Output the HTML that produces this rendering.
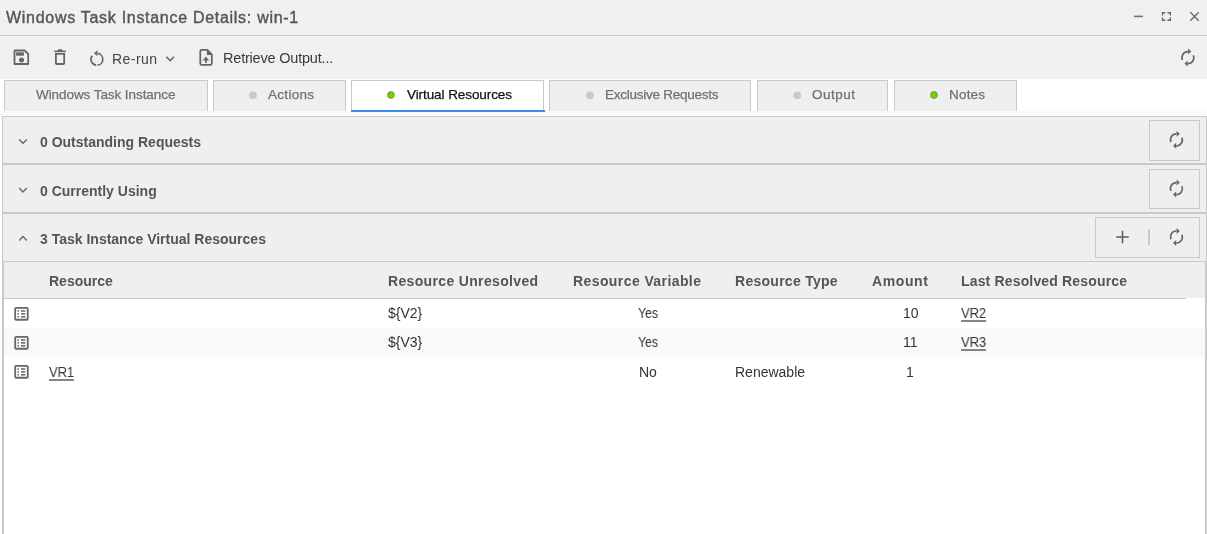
<!DOCTYPE html>
<html><head><meta charset="utf-8">
<style>
*{margin:0;padding:0;box-sizing:border-box}
html,body{width:1207px;height:534px;overflow:hidden;background:#f0f0f0;font-family:"Liberation Sans",sans-serif}
.a{position:absolute}
.t{position:absolute;white-space:nowrap;line-height:1;will-change:transform}
.hl{position:absolute;height:1px;background:#c9c9c9}
.tab{position:absolute;top:80px;height:31px;background:#efefef;border:1px solid #c9c9c9;border-bottom:none}
.btn{position:absolute;border:1px solid #c9c9c9;background:#efefef}
.sh{font-size:14px;font-weight:bold;color:#555}
.th{font-size:14px;font-weight:bold;color:#555}
.td{font-size:14px;color:#333}
.u{text-decoration:underline;text-decoration-color:#858585;text-decoration-thickness:1.6px;text-underline-offset:2px;transform:scaleX(0.93);transform-origin:0 0}
</style></head><body>
<!-- title bar -->
<div class="t" style="left:6px;top:9.5px;font-size:16px;color:#555;letter-spacing:0.71px;-webkit-text-stroke:0.4px #555">Windows Task Instance Details: win-1</div>
<div class="hl" style="left:0;top:35px;width:1207px"></div>

<!-- toolbar text -->
<div class="t" style="left:111.7px;top:52px;font-size:14px;color:#444;letter-spacing:0.45px">Re-run</div>
<div class="t" style="left:223.4px;top:50.5px;font-size:14.5px;color:#3a3a3a;letter-spacing:-0.2px">Retrieve Output...</div>

<!-- tab strip -->
<div class="a" style="left:0;top:79px;width:1207px;height:455px;background:#fff"></div>
<div class="a" style="left:0;top:111px;width:1207px;height:5px;background:#f9f9f9"></div>
<div class="tab" style="left:4px;width:204px"></div>
<div class="tab" style="left:213px;width:133px"></div>
<div class="tab" style="left:351px;width:193px;background:#fff"></div>
<div class="a" style="left:351px;top:110px;width:194px;height:2px;background:#3a8eea"></div>
<div class="tab" style="left:549px;width:202px"></div>
<div class="tab" style="left:757px;width:131px"></div>
<div class="tab" style="left:894px;width:123px"></div>
<div class="t" style="left:35.5px;top:88.4px;font-size:13.5px;color:#707070;-webkit-text-stroke:0.25px #707070;letter-spacing:-0.07px">Windows Task Instance</div>
<div class="t" style="left:268.4px;top:88.4px;font-size:13.5px;color:#707070;-webkit-text-stroke:0.25px #707070;letter-spacing:0.3px">Actions</div>
<div class="t" style="left:406.8px;top:88.4px;font-size:13.5px;color:#111;-webkit-text-stroke:0.25px #111;letter-spacing:-0.08px">Virtual Resources</div>
<div class="t" style="left:605.2px;top:88.4px;font-size:13.5px;color:#707070;-webkit-text-stroke:0.25px #707070;letter-spacing:-0.25px">Exclusive Requests</div>
<div class="t" style="left:812.3px;top:88.4px;font-size:13.5px;color:#707070;-webkit-text-stroke:0.25px #707070;letter-spacing:0.5px">Output</div>
<div class="t" style="left:949.1px;top:88.4px;font-size:13.5px;color:#707070;-webkit-text-stroke:0.25px #707070;letter-spacing:0.2px">Notes</div>

<!-- panel -->
<div class="a" style="left:2px;top:116px;width:1205px;height:418px;background:#efefef;border:1px solid #c9c9c9;border-bottom:none"></div>
<div class="hl" style="left:2px;top:163px;width:1205px;height:2px"></div>
<div class="hl" style="left:2px;top:212px;width:1205px;height:2px"></div>
<div class="hl" style="left:2px;top:261px;width:1205px"></div>
<div class="t sh" style="left:39.8px;top:134.9px">0 Outstanding Requests</div>
<div class="t sh" style="left:39.8px;top:184.3px">0 Currently Using</div>
<div class="t sh" style="left:39.8px;top:232.1px">3 Task Instance Virtual Resources</div>
<div class="btn" style="left:1149px;top:120px;width:51px;height:41px"></div>
<div class="btn" style="left:1149px;top:169px;width:51px;height:40px"></div>
<div class="btn" style="left:1095px;top:217px;width:105px;height:41px"></div>

<!-- table -->
<div class="a" style="left:2px;top:262px;width:1205px;height:272px;background:#fff;border-left:2px solid #c9c9c9;border-right:2px solid #c9c9c9"></div>
<div class="a" style="left:4px;top:262px;width:1201px;height:36px;background:#efefef"></div>
<div class="hl" style="left:4px;top:298px;width:1182px"></div>
<div class="a" style="left:4px;top:328px;width:1201px;height:29px;background:#f9f9f9"></div>
<div class="t th" style="left:49.2px;top:274px">Resource</div>
<div class="t th" style="left:388.2px;top:274px;letter-spacing:0.34px">Resource Unresolved</div>
<div class="t th" style="left:572.9px;top:274px;letter-spacing:0.41px">Resource Variable</div>
<div class="t th" style="left:734.7px;top:274px;letter-spacing:0.27px">Resource Type</div>
<div class="t th" style="left:871.5px;top:274px;letter-spacing:0.6px">Amount</div>
<div class="t th" style="left:961.2px;top:274px;letter-spacing:0.16px">Last Resolved Resource</div>

<div class="t td" style="left:388.2px;top:306.2px">${V2}</div>
<div class="t td" style="left:637.6px;top:306.2px;transform:scaleX(0.88);transform-origin:0 0">Yes</div>
<div class="t td" style="left:902.6px;top:306.2px">10</div>
<div class="t td u" style="left:961.2px;top:306.2px;letter-spacing:-0.1px">VR2</div>

<div class="t td" style="left:388.2px;top:335.2px">${V3}</div>
<div class="t td" style="left:637.6px;top:335.2px;transform:scaleX(0.88);transform-origin:0 0">Yes</div>
<div class="t td" style="left:902.6px;top:335.2px">11</div>
<div class="t td u" style="left:961.2px;top:335.2px;letter-spacing:-0.1px">VR3</div>

<div class="t td u" style="left:48.5px;top:364.9px;letter-spacing:-0.1px">VR1</div>
<div class="t td" style="left:639px;top:364.9px">No</div>
<div class="t td" style="left:734.7px;top:364.9px">Renewable</div>
<div class="t td" style="left:906px;top:364.9px">1</div>

<!-- icons overlay -->
<svg class="a" style="left:0;top:0" width="1207" height="534" viewBox="0 0 1207 534">
<path d="M14.5,50.5 H24.7 L28.2,54 V64 H14.5 Z" fill="none" stroke="#666" stroke-width="1.8" stroke-linejoin="round"/>
<rect x="16.1" y="52.3" width="7.8" height="3.4" fill="#666"/>
<circle cx="21.5" cy="59.9" r="2.5" fill="#666"/>
<path d="M54.1,51.4 H66" stroke="#666" stroke-width="1.5"/>
<path d="M57,51.4 L58.2,49.3 H62.1 L63.3,51.4 Z" fill="#666"/>
<path d="M55.9,53.9 V63 Q55.9,64 56.9,64 H63.2 Q64.2,64 64.2,63 V53.9 Z" fill="none" stroke="#666" stroke-width="1.8"/>
<path d="M97.72,53.46 A5.9,5.9 0 0 1 97.52,65.17" fill="none" stroke="#666" stroke-width="1.7"/>
<path d="M96.18,65.16 A5.9,5.9 0 0 1 92.25,55.67" fill="none" stroke="#666" stroke-width="1.7"/>
<path d="M94.0,53.3 L97.4,50.2 V56.3 Z" fill="#666"/>
<path d="M166.3,56.8 L170.2,60.6 L174.1,56.8" fill="none" stroke="#666" stroke-width="1.5"/>
<path d="M201.8,49.8 H207.3 L211.8,54.3 V63.4 Q211.8,64.9 210.3,64.9 H201.8 Q200.3,64.9 200.3,63.4 V51.3 Q200.3,49.8 201.8,49.8 Z" fill="none" stroke="#666" stroke-width="1.8" stroke-linejoin="round"/>
<path d="M206.9,49.5 L212.3,54.9 H206.9 Z" fill="#666"/>
<path d="M205.9,56.6 L202.6,60.6 H209.2 Z" fill="#666"/>
<rect x="205.2" y="60" width="1.6" height="3.1" fill="#666"/>
<path d="M1182.38,59.94 A6.0,6.0 0 0 1 1188.00,51.60" fill="none" stroke="#666" stroke-width="1.8"/>
<path d="M1193.42,55.26 A6.0,6.0 0 0 1 1187.80,63.60" fill="none" stroke="#666" stroke-width="1.8"/>
<path d="M1191.30,51.60 L1188.10,48.60 L1188.10,54.60 Z" fill="#666"/>
<path d="M1184.50,63.60 L1187.70,66.60 L1187.70,60.60 Z" fill="#666"/>
<path d="M1134,16.4 H1143" stroke="#6b7280" stroke-width="1.6"/>
<path d="M1162.5,15.5 V12.7 H1165.3 M1167.5,12.7 H1170.3 V15.5 M1170.3,17.5 V20.3 H1167.5 M1165.3,20.3 H1162.5 V17.5" fill="none" stroke="#666" stroke-width="1.4"/>
<path d="M1190.3,12.3 L1198.7,20.7 M1198.7,12.3 L1190.3,20.7" stroke="#666" stroke-width="1.3"/>
<path d="M19.2,139.5 L23,143.3 L26.8,139.5" fill="none" stroke="#666" stroke-width="1.4"/>
<path d="M19.2,188.1 L23,191.9 L26.8,188.1" fill="none" stroke="#666" stroke-width="1.4"/>
<path d="M19.2,240.4 L23,236.6 L26.8,240.4" fill="none" stroke="#666" stroke-width="1.4"/>
<path d="M1170.88,142.14 A6.0,6.0 0 0 1 1176.50,133.80" fill="none" stroke="#666" stroke-width="1.7"/>
<path d="M1181.92,137.46 A6.0,6.0 0 0 1 1176.30,145.80" fill="none" stroke="#666" stroke-width="1.7"/>
<path d="M1179.80,133.80 L1176.60,130.80 L1176.60,136.80 Z" fill="#666"/>
<path d="M1173.00,145.80 L1176.20,148.80 L1176.20,142.80 Z" fill="#666"/>
<path d="M1170.88,190.94 A6.0,6.0 0 0 1 1176.50,182.60" fill="none" stroke="#666" stroke-width="1.7"/>
<path d="M1181.92,186.26 A6.0,6.0 0 0 1 1176.30,194.60" fill="none" stroke="#666" stroke-width="1.7"/>
<path d="M1179.80,182.60 L1176.60,179.60 L1176.60,185.60 Z" fill="#666"/>
<path d="M1173.00,194.60 L1176.20,197.60 L1176.20,191.60 Z" fill="#666"/>
<path d="M1170.88,239.34 A6.0,6.0 0 0 1 1176.50,231.00" fill="none" stroke="#666" stroke-width="1.7"/>
<path d="M1181.92,234.66 A6.0,6.0 0 0 1 1176.30,243.00" fill="none" stroke="#666" stroke-width="1.7"/>
<path d="M1179.80,231.00 L1176.60,228.00 L1176.60,234.00 Z" fill="#666"/>
<path d="M1173.00,243.00 L1176.20,246.00 L1176.20,240.00 Z" fill="#666"/>
<path d="M1116.2,237 H1128.8 M1122.5,230.8 V243.2" stroke="#5f5f5f" stroke-width="1.6"/>
<path d="M1149,229 V245" stroke="#a9b6c6" stroke-width="1.3"/>
<defs><radialGradient id="g" cx="50%" cy="55%" r="55%"><stop offset="0" stop-color="#8ad40c"/><stop offset="0.7" stop-color="#76bb1a"/><stop offset="1" stop-color="#5f9a2c"/></radialGradient></defs>
<circle cx="252.95" cy="95.3" r="3.9" fill="#cacaca"/>
<circle cx="390.95" cy="95.1" r="3.8" fill="url(#g)"/>
<circle cx="590" cy="95.3" r="3.9" fill="#cacaca"/>
<circle cx="797.2" cy="95.3" r="3.9" fill="#cacaca"/>
<circle cx="934" cy="95.1" r="3.8" fill="url(#g)"/>
<rect x="15.2" y="307.8" width="12.55" height="11.95" rx="1" fill="none" stroke="#666" stroke-width="1.8"/>
<rect x="17.5" y="310.25" width="1.5" height="1.5" fill="#666"/>
<rect x="21" y="310.25" width="4.3" height="1.5" fill="#666"/>
<rect x="17.5" y="313.15" width="1.5" height="1.5" fill="#666"/>
<rect x="21" y="313.15" width="4.3" height="1.5" fill="#666"/>
<rect x="17.5" y="316.05" width="1.5" height="1.5" fill="#666"/>
<rect x="21" y="316.05" width="4.3" height="1.5" fill="#666"/>
<rect x="15.2" y="336.8" width="12.55" height="11.95" rx="1" fill="none" stroke="#666" stroke-width="1.8"/>
<rect x="17.5" y="339.25" width="1.5" height="1.5" fill="#666"/>
<rect x="21" y="339.25" width="4.3" height="1.5" fill="#666"/>
<rect x="17.5" y="342.15" width="1.5" height="1.5" fill="#666"/>
<rect x="21" y="342.15" width="4.3" height="1.5" fill="#666"/>
<rect x="17.5" y="345.05" width="1.5" height="1.5" fill="#666"/>
<rect x="21" y="345.05" width="4.3" height="1.5" fill="#666"/>
<rect x="15.2" y="365.8" width="12.55" height="11.95" rx="1" fill="none" stroke="#666" stroke-width="1.8"/>
<rect x="17.5" y="368.25" width="1.5" height="1.5" fill="#666"/>
<rect x="21" y="368.25" width="4.3" height="1.5" fill="#666"/>
<rect x="17.5" y="371.15" width="1.5" height="1.5" fill="#666"/>
<rect x="21" y="371.15" width="4.3" height="1.5" fill="#666"/>
<rect x="17.5" y="374.05" width="1.5" height="1.5" fill="#666"/>
<rect x="21" y="374.05" width="4.3" height="1.5" fill="#666"/>
</svg>
</body></html>
